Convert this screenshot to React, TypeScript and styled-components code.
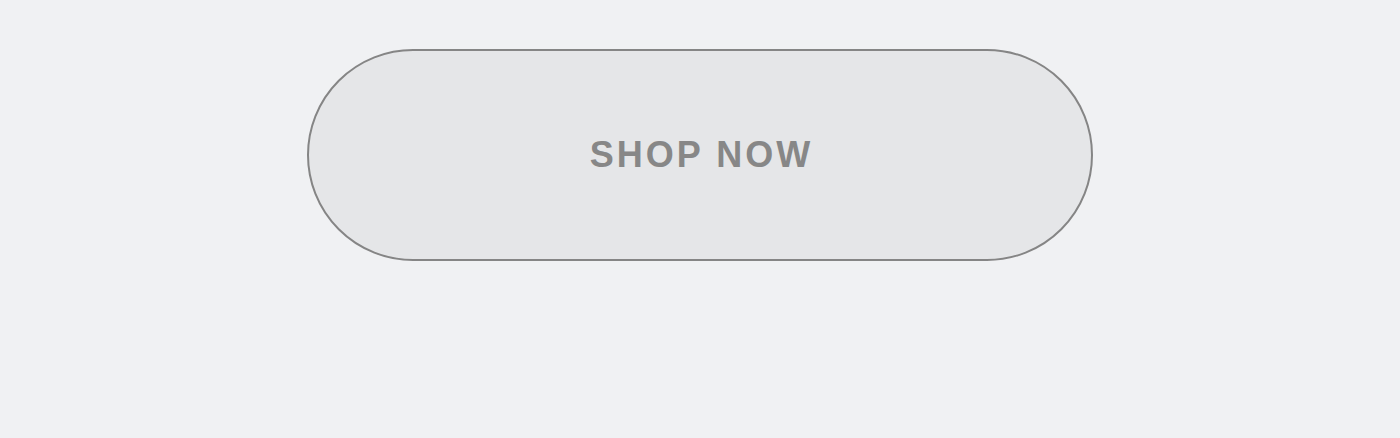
import styled, { createGlobalStyle } from 'styled-components'

const GlobalStyle = createGlobalStyle`
  html, body {
    margin: 0;
    padding: 0;
    background: #f0f1f3;
  }
`

const Page = styled.div`
  width: 100%;
  height: 438px;
  display: flex;
  justify-content: center;
  align-items: flex-start;
  padding-top: 49px;
  box-sizing: border-box;
`

const ShopButton = styled.button`
  width: 786px;
  height: 212px;
  box-sizing: border-box;
  border: 2.5px solid #858585;
  border-radius: 106px;
  background: #e5e6e8;
  color: #878787;
  font-family: 'Liberation Sans', Arial, sans-serif;
  font-size: 36px;
  font-weight: 700;
  letter-spacing: 3px;
  text-indent: 3px;
  text-transform: uppercase;
  cursor: pointer;
`

export default function App() {
  return (
    <>
      <GlobalStyle />
      <Page>
        <ShopButton>Shop now</ShopButton>
      </Page>
    </>
  )
}
